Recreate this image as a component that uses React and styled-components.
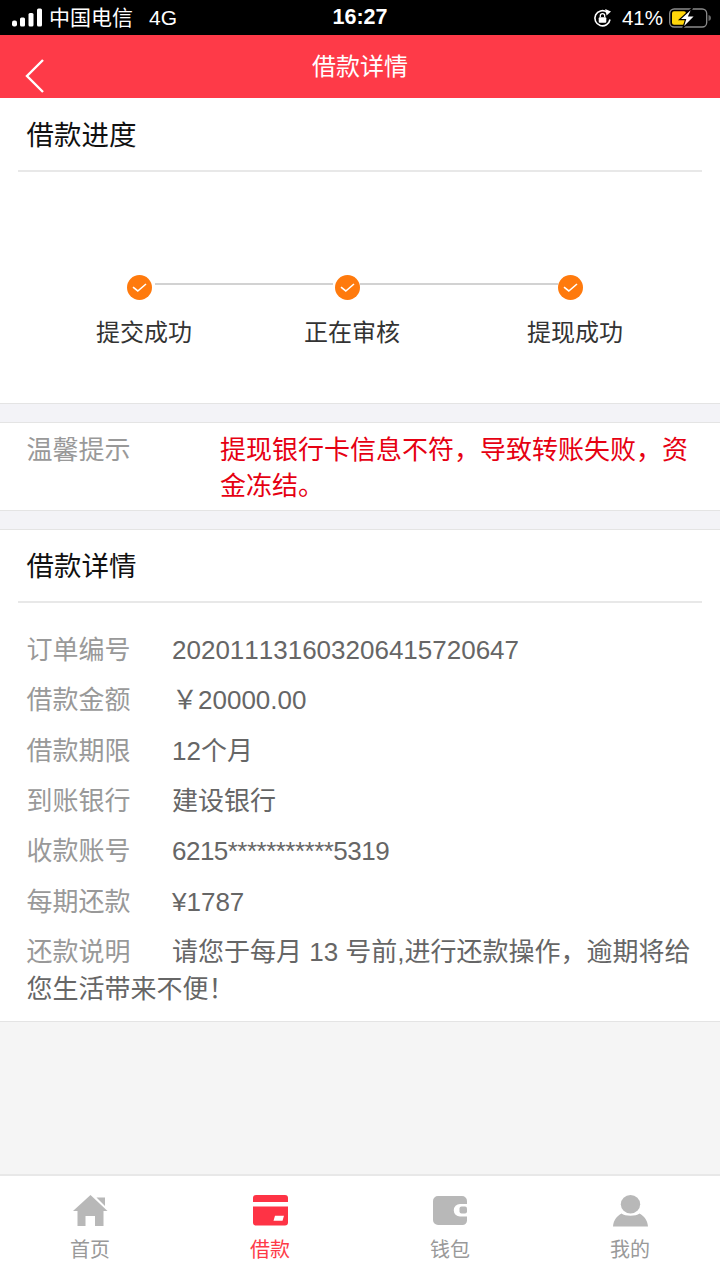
import React from 'react'
import styled, { createGlobalStyle } from 'styled-components'

const GlobalStyle = createGlobalStyle`
  html, body {
    margin: 0;
    padding: 0;
    background: #f5f5f5;
    font-family: "Liberation Sans", "Noto Sans CJK SC", sans-serif;
  }
  * { box-sizing: border-box; }
`

const Page = styled.div`
  width: 720px;
  height: 1280px;
  display: flex;
  flex-direction: column;
  overflow: hidden;
  background: #f3f3f7;
`

const StatusBar = styled.div`
  height: 35px;
  flex: none;
  background: #000;
  color: #fff;
  display: grid;
  grid-template-columns: 1fr auto 1fr;
  align-items: center;
  padding: 0 9px 0 12px;
`

const StatusLeft = styled.div`
  display: flex;
  align-items: center;
  font-size: 21px;
  line-height: 35px;
`

const Carrier = styled.span`
  margin-left: 7px;
  margin-right: 16px;
`

const Clock = styled.div`
  font-size: 21.5px;
  font-weight: 700;
  line-height: 35px;
  margin-left: -3px;
`

const StatusRight = styled.div`
  display: flex;
  align-items: center;
  justify-content: flex-end;
  gap: 6px;
  font-size: 20.5px;
  line-height: 35px;
`

const LockSlot = styled.span`
  display: flex;
  margin-right: 4px;
`

const Header = styled.header`
  height: 63px;
  flex: none;
  background: #fe3a48;
  color: #fff;
  display: flex;
  justify-content: center;
  position: relative;
  font-size: 24px;
  line-height: 63px;
`

const BackIcon = styled.svg`
  position: absolute;
  left: 24px;
  top: 23px;
`

const Card = styled.section`
  background: #fff;
  border-bottom: 1px solid #e4e4e4;
  flex: none;
`

const GapCard = styled(Card)`
  margin-top: 18px;
  border-top: 1px solid #e4e4e4;
`

const CardTitle = styled.div`
  margin: 0 18px;
  padding-left: 8.5px;
  height: ${({ $h }) => $h}px;
  line-height: ${({ $h }) => $h + 1}px;
  font-size: 27.5px;
  color: #111;
  border-bottom: 2px solid #e8e8e8;
`

const Progress = styled.div`
  height: 231px;
  padding-top: 103px;
`

const DotRow = styled.div`
  display: flex;
  padding-left: 127px;
  height: 25px;
`

const Dot = styled.span`
  width: 25px;
  height: 25px;
  flex: none;
  border-radius: 50%;
  background: #ff7a0d;
  display: flex;
  align-items: center;
  justify-content: center;
`

const Connector = styled.span`
  width: ${({ $w }) => $w}px;
  height: 2px;
  margin: 8px ${({ $mr }) => $mr}px 0 ${({ $ml }) => $ml}px;
  background: #d2d2d2;
  flex: none;
`

const StepLabels = styled.div`
  display: flex;
  margin-top: 19px;
  padding-left: 96px;
  font-size: 24px;
  line-height: 28px;
  color: #333;
`

const StepLabel = styled.span`
  width: 96px;
  flex: none;
  margin-right: ${({ $mr }) => $mr}px;
`

const TipCard = styled(GapCard)`
  height: 89px;
  display: flex;
  padding: 9px 20px 0 26.5px;
  font-size: 26px;
  line-height: 36px;
`

const TipLabel = styled.div`
  width: 193.5px;
  flex: none;
  color: #999;
`

const TipText = styled.div`
  color: #e60012;
`

const DetailRows = styled.div`
  padding: 22.5px 26px 12.5px 26.5px;
  font-size: 26px;
  line-height: 37px;
  font-kerning: none;
`

const Row = styled.div`
  display: flex;
  height: 50.3px;
  align-items: center;
`

const RowLabel = styled.span`
  width: 145.5px;
  flex: none;
  color: #999;
`

const RowValue = styled.span`
  color: #666;
  letter-spacing: ${({ $tight }) => ($tight ? '-0.52px' : 'normal')};
`

const NoteTail = styled.div`
  color: #666;
`

const NoteRow = styled.div`
  display: flex;
  height: 37px;
  margin-top: 7px;
`

const Spacer = styled.div`
  flex: 1;
  background: #f5f5f5;
`

const TabBar = styled.nav`
  height: 106px;
  flex: none;
  background: #fff;
  border-top: 2px solid #e8e8e8;
  display: grid;
  grid-template-columns: repeat(4, 1fr);
`

const Tab = styled.div`
  display: flex;
  flex-direction: column;
  align-items: center;
  padding-top: 19px;
  color: ${({ $active }) => ($active ? '#fe3a48' : '#999')};
  font-size: 20px;
  line-height: 26px;
  gap: 9px;
`

const TabIcon = styled.span`
  display: flex;
  height: 33px;
  align-items: flex-start;
`

const Check = () => (
  <svg width="15" height="11" viewBox="0 0 15 11" fill="none">
    <path d="M1 5.2 L5.8 9 L14 2" stroke="#fff" strokeWidth="1.6" />
  </svg>
)

const SignalBars = () => (
  <svg width="30" height="19" viewBox="0 0 30 19" fill="#fff">
    <rect x="0" y="12.5" width="5" height="6" rx="2" />
    <rect x="8" y="9.5" width="5" height="9" rx="1.5" />
    <rect x="16.5" y="5" width="5" height="13.5" rx="1.5" />
    <rect x="25" y="0.5" width="5" height="18" rx="1.5" />
  </svg>
)

const RotationLock = () => (
  <svg width="19" height="20" viewBox="0 0 19 20" fill="none">
    <path d="M17 11.5 A7.6 7.6 0 1 1 13.8 4" stroke="#fff" strokeWidth="1.6" />
    <path d="M12.2 1 L18 3.4 L13.6 7.6 Z" fill="#fff" />
    <rect x="5.7" y="9.2" width="7.6" height="5.6" rx="1" fill="#fff" />
    <path d="M7.3 9.2 V7.8 a2.2 2.2 0 0 1 4.4 0 V9.2" stroke="#fff" strokeWidth="1.3" />
  </svg>
)

const Battery = () => (
  <svg width="42" height="22" viewBox="0 0 42 22" fill="none">
    <rect x="0.7" y="2" width="37" height="18" rx="4.5" stroke="#8b8b8b" strokeWidth="1.3" />
    <rect x="3" y="4.2" width="14" height="13.6" rx="2" fill="#ffd60a" />
    <path d="M39.5 8 c1.6 .4 2.5 1.4 2.5 3 s-.9 2.6-2.5 3 Z" fill="#666" />
    <path d="M23.5 0.8 L10.5 12.6 H16.5 L13.8 21.2 L26 9 H19.8 Z" fill="#fff" stroke="#000" strokeWidth="1.2" />
  </svg>
)

const HomeIcon = () => (
  <svg width="35" height="32" viewBox="0 0 35 32" fill="#b8b8b8">
    <path d="M17.5 0 L34.5 16 H30.5 V31 H22 V21 H12.5 V31 H4.5 V16 H0 Z" />
    <path d="M23.5 2.5 H32 V11 Z" />
  </svg>
)

const LoanIcon = () => (
  <svg width="35" height="31" viewBox="0 0 35 31" fill="#fe3345">
    <path d="M3 0 H32 a3 3 0 0 1 3 3 V7 H0 V3 a3 3 0 0 1 3-3 Z" />
    <path fillRule="evenodd" d="M0 11.5 H35 V27.5 a3 3 0 0 1-3 3 H3 a3 3 0 0 1-3-3 Z M22 20.7 L20.5 25.7 H29.5 L31 20.7 Z" />
  </svg>
)

const WalletIcon = () => (
  <svg width="34" height="31" viewBox="0 0 34 31" fill="#b8b8b8">
    <path fillRule="evenodd" d="M5 1 H29 a5 5 0 0 1 5 5 V9 H27 a6 6 0 0 0 0 12.5 H34 V25.5 a4.5 4.5 0 0 1-4.5 4.5 H5 a5 5 0 0 1-5-5 V6 a5 5 0 0 1 5-5 Z" />
    <rect x="26.5" y="11.5" width="7.5" height="7" rx="2" />
  </svg>
)

const UserIcon = () => (
  <svg width="35" height="32" viewBox="0 0 35 32" fill="#b8b8b8">
    <ellipse cx="17.5" cy="9.2" rx="9.7" ry="9.2" />
    <path d="M0 31.5 C0.5 25 4 21 8.5 18.5 C12 21.5 23 21.5 26.5 18.5 C31 21 34.5 25 35 31.5 Z" />
  </svg>
)

const details = [
  { label: '订单编号', value: '202011131603206415720647' },
  { label: '借款金额', value: ' ￥20000.00' },
  { label: '借款期限', value: '12个月' },
  { label: '到账银行', value: '建设银行' },
  { label: '收款账号', value: '6215***********5319', tight: true },
  { label: '每期还款', value: '¥1787' },
]

const tabs = [
  { label: '首页', icon: <HomeIcon /> },
  { label: '借款', icon: <LoanIcon />, active: true },
  { label: '钱包', icon: <WalletIcon /> },
  { label: '我的', icon: <UserIcon /> },
]

const App = () => {
  return (
    <Page>
      <GlobalStyle />
      <StatusBar>
        <StatusLeft>
          <SignalBars />
          <Carrier>中国电信</Carrier>
          <span>4G</span>
        </StatusLeft>
        <Clock>16:27</Clock>
        <StatusRight>
          <LockSlot><RotationLock /></LockSlot>
          <span>41%</span>
          <Battery />
        </StatusRight>
      </StatusBar>

      <Header>
        <BackIcon width="22" height="36" viewBox="0 0 22 36" fill="none">
          <path d="M19 2 L3 18 L19 34" stroke="#fff" strokeWidth="2.4" />
        </BackIcon>
        借款详情
      </Header>

      <Card>
        <CardTitle $h={74}>借款进度</CardTitle>
        <Progress>
          <DotRow>
            <Dot><Check /></Dot>
            <Connector $ml={3} $w={178} $mr={2} />
            <Dot><Check /></Dot>
            <Connector $ml={0} $w={198} $mr={0} />
            <Dot><Check /></Dot>
          </DotRow>
          <StepLabels>
            <StepLabel $mr={112}>提交成功</StepLabel>
            <StepLabel $mr={127}>正在审核</StepLabel>
            <StepLabel>提现成功</StepLabel>
          </StepLabels>
        </Progress>
      </Card>

      <TipCard>
        <TipLabel>温馨提示</TipLabel>
        <TipText>提现银行卡信息不符，导致转账失败，资金冻结。</TipText>
      </TipCard>

      <GapCard>
        <CardTitle $h={73}>借款详情</CardTitle>
        <DetailRows>
          {details.map((item) => (
            <Row key={item.label}>
              <RowLabel>{item.label}</RowLabel>
              <RowValue $tight={item.tight}>{item.value}</RowValue>
            </Row>
          ))}
          <NoteRow>
            <RowLabel>还款说明</RowLabel>
            <RowValue>请您于每月 13 号前,进行还款操作，逾期将给</RowValue>
          </NoteRow>
          <NoteTail>您生活带来不便！</NoteTail>
        </DetailRows>
      </GapCard>

      <Spacer />

      <TabBar>
        {tabs.map((tab) => (
          <Tab key={tab.label} $active={tab.active}>
            <TabIcon>{tab.icon}</TabIcon>
            <span>{tab.label}</span>
          </Tab>
        ))}
      </TabBar>
    </Page>
  )
}

export default App
